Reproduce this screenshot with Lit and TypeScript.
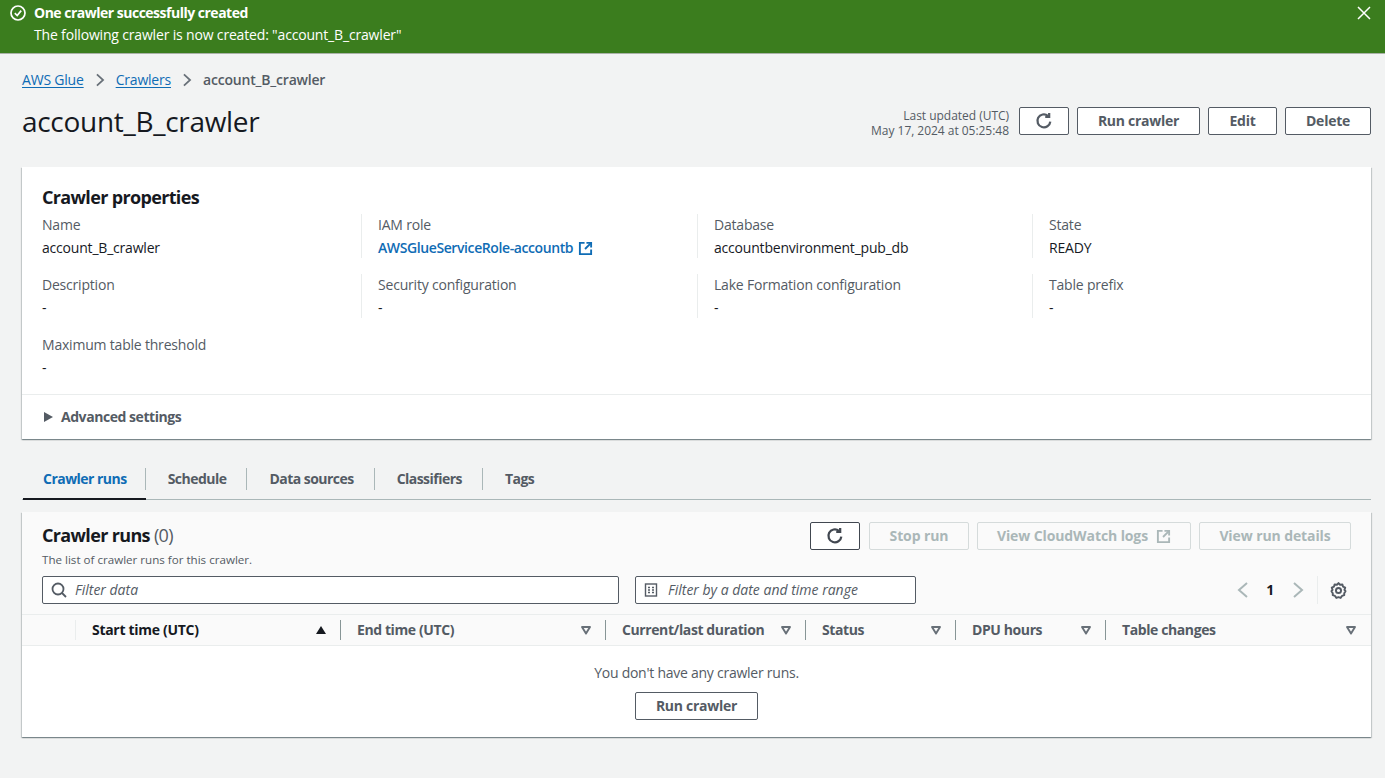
import { LitElement, html, css, svg } from "lit";
import { customElement } from "lit/decorators.js";

const refresh = (s = 18) => html`<svg class="ic" width=${s} height=${s} viewBox="0 0 16 16" fill="none" stroke="currentColor" stroke-width="2"><path d="M13.6 8.5A5.75 5.75 0 1 1 11.5 3.4"/><path d="M12.6 .8V4.3H9.1" stroke-linejoin="miter"/></svg>`;
const ext = (s = 16) => html`<svg class="ic" width=${s} height=${s} viewBox="0 0 16 16" fill="none" stroke="currentColor" stroke-width="2"><path d="M7 2H2V14H14V9"/><path d="M9 2H14V7"/><path d="M14 2L7.5 8.5"/></svg>`;
const caret = (active = false) => html`<svg class="sort" width="12" height="12" viewBox="0 0 12 12">${active
  ? svg`<path d="M1 10L6 2L11 10Z" fill="#16191f"/>`
  : svg`<path d="M2 3H10L6 9.6Z" fill="none" stroke="#687078" stroke-width="1.9" stroke-linejoin="round"/>`}</svg>`;

const props = [
  ["Name", "account_B_crawler"], ["IAM role", "AWSGlueServiceRole-accountb"], ["Database", "accountbenvironment_pub_db"], ["State", "READY"],
  ["Description", "-"], ["Security configuration", "-"], ["Lake Formation configuration", "-"], ["Table prefix", "-"],
  ["Maximum table threshold", "-"],
];
const tabs = ["Crawler runs", "Schedule", "Data sources", "Classifiers", "Tags"];
const cols = [["Start time (UTC)", 265], ["End time (UTC)", 265], ["Current/last duration", 200], ["Status", 150], ["DPU hours", 150], ["Table changes", 0]] as const;

@customElement("app-root")
export class AppRoot extends LitElement {
  static styles = css`
    :host { display: block; height: 778px; background: #f2f3f3; color: #16191f; font: 14px/20px "Open Sans", "Noto Sans", sans-serif; overflow: hidden; letter-spacing: -0.2px; }
    .ic { display: block; flex: none; }
    .banner { height: 54px; box-sizing: border-box; background: #3b7d1e; color: #fff; border-bottom: 1px solid #aab2a8; display: flex; padding: 2px 14px 0 10px; gap: 8px; }
    .banner b { font-weight: 700; display: block; letter-spacing: -0.5px; }
    .banner .msg { flex: 1; line-height: 22px; letter-spacing: -0.17px; }
    .main { padding: 15px 14px 0 22px; }
    .crumbs { display: flex; align-items: center; height: 22px; font-weight: 600; color: #545b64; }
    .crumbs a { color: #0f6cb5; text-decoration: underline; text-underline-offset: 2px; font-weight: 500; }
    .crumbs svg { margin: 0 9px; }
    .head { display: flex; align-items: flex-start; justify-content: space-between; margin-top: 5px; }
    h1 { margin: 0; font-size: 28px; line-height: 36px; font-weight: 400; letter-spacing: -0.3px; padding-top: 7px; }
    .actions { display: flex; align-items: flex-start; gap: 8px; padding-top: 11px; }
    .updated { font-size: 12px; line-height: 15px; margin-top: 1px; height: 28px; text-align: right; color: #545b64; margin-right: 2px; letter-spacing: -0.03px; }
    .btn { box-sizing: border-box; height: 28px; border: 1px solid #545b64; border-radius: 2px; background: #fff; color: #545b64; font-weight: 700; display: flex; align-items: center; justify-content: center; gap: 8px; white-space: nowrap; letter-spacing: -0.27px; }
    .btn.off { border-color: #d5dbdb; color: #aab7b8; background: #fafafa; letter-spacing: -0.1px; }
    .btn.dark { color: #414750; border-color: #414750; margin-right: 1px; }
    .card { background: #fff; box-shadow: 0 1px 1px 0 rgba(0,28,36,.3), 1px 1px 1px 0 rgba(0,28,36,.15), -1px 1px 1px 0 rgba(0,28,36,.15); }
    .props { margin-top: 28px; height: 272px; display: flex; flex-direction: column; }
    .props h2 { margin: 0; font-size: 18px; line-height: 24px; font-weight: 700; padding: 18px 20px 5px; letter-spacing: -0.65px; }
    .grid { display: grid; grid-template-columns: 319px 336px 335px 335px; padding-left: 20px; row-gap: 16px; flex: 1; align-content: start; }
    .cell { height: 44px; padding-left: 16px; border-left: 1px solid #eaeded; box-sizing: border-box; line-height: 22px; }
    .cell:nth-child(4n+1) { padding-left: 0; border-left: 0; }
    .cell:nth-child(9) { border-left: 0; }
    .cell .k { color: #545b64; }
    .cell .v { display: flex; align-items: center; gap: 5px; padding-top: 1px; }
    .cell a { color: #0f6cb5; font-weight: 600; letter-spacing: -0.4px; }
    .cell a + svg { color: #0f6cb5; }
    .adv { border-top: 1px solid #eaeded; height: 45px; flex: none; box-sizing: border-box; display: flex; align-items: center; padding-left: 22px; gap: 8px; font-weight: 700; color: #545b64; letter-spacing: -0.45px; }
    .tabs { display: flex; margin-top: 28px; border-bottom: 1px solid #aab7b8; height: 33px; box-sizing: border-box; padding-left: 1px; }
    .tab { display: flex; height: 33px; box-sizing: border-box; font-weight: 700; color: #545b64; align-items: flex-start; letter-spacing: -0.53px; }
    .tab span { border-right: 1px solid #aab7b8; height: 22px; padding: 0 20px 0 22px; line-height: 22px; margin-top: 1px; }
    .tab:first-child span { padding-left: 20px; padding-right: 18px; }
    .tab:last-child span { border-right: 0; }
    .tab.on { color: #0f6cb5; border-bottom: 2px solid #16191f; }
    .runs { margin-top: 12px; height: 225px; display: flex; flex-direction: column; }
    .runs-top { background: #fafafa; height: 103px; box-sizing: border-box; padding: 10px 20px 0; border-bottom: 1px solid #eaeded; flex: none; }
    .r1 { display: flex; justify-content: space-between; align-items: flex-start; height: 38px; }
    .r1 h2 { margin: -1px 0 3px; font-size: 18px; line-height: 28px; font-weight: 700; letter-spacing: -0.65px; }
    .r1 h2 span { font-weight: 400; color: #545b64; }
    .r1 .desc { font-size: 11.6px; line-height: 16px; color: #545b64; letter-spacing: 0; }
    .r1 .acts { display: flex; gap: 8px; }
    .r2 { display: flex; align-items: center; margin-top: 16px; }
    .input { box-sizing: border-box; height: 28px; border: 1px solid #545b64; border-radius: 2px; background: #fff; display: flex; align-items: center; gap: 8px; padding-left: 8px; font-style: italic; color: #545b64; letter-spacing: 0; }
    .input.date { gap: 10px; margin-left: 16px; }
    .pager { margin-left: auto; margin-right: 4px; display: flex; align-items: center; color: #16191f; font-weight: 700; }
    .pager span { margin: 0 16px 0 15px; }
    .pager .sep { width: 1px; height: 28px; background: #eaeded; margin: 0 12px 0 11px; }
    .thead { display: flex; height: 31px; box-sizing: border-box; background: #fafafa; border-bottom: 1px solid #eaeded; align-items: center; flex: none; font-weight: 700; color: #545b64; letter-spacing: -0.4px; }
    .lead { width: 54px; height: 20px; border-right: 1px solid #eaeded; flex: none; box-sizing: border-box; }
    .th { display: flex; align-items: center; justify-content: space-between; height: 20px; box-sizing: border-box; padding: 0 13px 0 16px; border-right: 1px solid #879596; flex: none; }
    .th.first { color: #16191f; letter-spacing: -0.3px; }
    .th:last-child { border-right: 0; flex: 1; padding-right: 14px; }
    .sort { display: block; flex: none; }
    .empty { flex: 1; display: flex; flex-direction: column; align-items: center; padding-top: 17px; color: #545b64; letter-spacing: -0.25px; }
    .empty .btn { margin-top: 9px; width: 123px; }
  `;
  render() {
    const sep = html`<svg width="14" height="14" viewBox="0 0 16 16" fill="none" stroke="#687078" stroke-width="2"><path d="M4.5 1.5L11.5 8L4.5 14.5"/></svg>`;
    return html`
      <div class="banner">
        <svg class="ic" style="margin-top:3px" width="16" height="16" viewBox="0 0 16 16" fill="none" stroke="#fff" stroke-width="1.7"><circle cx="8" cy="8" r="7"/><path d="M4.8 8.2L7.2 10.5L11.2 5.6"/></svg>
        <div class="msg"><b>One crawler successfully created</b>The following crawler is now created: "account_B_crawler"</div>
        <svg class="ic" style="margin-top:4px" width="14" height="14" viewBox="0 0 14 14" stroke="#fff" stroke-width="1.5"><path d="M1 1L13 13M13 1L1 13"/></svg>
      </div>
      <div class="main">
        <div class="crumbs"><a>AWS Glue</a>${sep}<a>Crawlers</a>${sep}<span>account_B_crawler</span></div>
        <div class="head">
          <h1>account_B_crawler</h1>
          <div class="actions">
            <div class="updated">Last updated (UTC)<br/>May 17, 2024 at 05:25:48</div>
            <div class="btn" style="width:50px">${refresh()}</div>
            <div class="btn" style="width:123px">Run crawler</div>
            <div class="btn" style="width:69px">Edit</div>
            <div class="btn" style="width:86px">Delete</div>
          </div>
        </div>
        <section class="card props">
          <h2>Crawler properties</h2>
          <div class="grid">
            ${props.map(([k, v]) => html`<div class="cell"><div class="k">${k}</div><div class="v">${k === "IAM role" ? html`<a>${v}</a>${ext(15)}` : v}</div></div>`)}
          </div>
          <div class="adv"><svg width="9" height="10" viewBox="0 0 9 10"><path d="M0 0L9 5L0 10Z" fill="#545b64"/></svg>Advanced settings</div>
        </section>
        <div class="tabs">${tabs.map((t, i) => html`<div class="tab ${i === 0 ? "on" : ""}"><span>${t}</span></div>`)}</div>
        <section class="card runs">
          <div class="runs-top">
            <div class="r1">
              <div><h2>Crawler runs <span>(0)</span></h2><div class="desc">The list of crawler runs for this crawler.</div></div>
              <div class="acts">
                <div class="btn dark" style="width:50px">${refresh()}</div>
                <div class="btn off" style="width:100px">Stop run</div>
                <div class="btn off" style="width:214px">View CloudWatch logs ${ext(15)}</div>
                <div class="btn off" style="width:152px">View run details</div>
              </div>
            </div>
            <div class="r2">
              <div class="input" style="width:577px"><svg class="ic" width="16" height="16" viewBox="0 0 16 16" fill="none" stroke="#545b64" stroke-width="1.8"><circle cx="7" cy="7" r="5.5"/><path d="M11 11L15 15"/></svg>Filter data</div>
              <div class="input date" style="width:281px"><svg class="ic" width="14" height="14" viewBox="0 0 14 14" fill="none" stroke="#545b64" stroke-width="1.4"><rect x="1.5" y="1" width="11" height="12"/><path d="M4 4.5H6M8 4.5H10M4 7H6M8 7H10M4 9.5H6M8 9.5H10"/></svg>Filter by a date and time range</div>
              <div class="pager">
                <svg width="16" height="18" viewBox="0 0 16 18" fill="none" stroke="#aab7b8" stroke-width="2"><path d="M12 2L4 9L12 16"/></svg>
                <span>1</span>
                <svg width="16" height="18" viewBox="0 0 16 18" fill="none" stroke="#aab7b8" stroke-width="2"><path d="M4 2L12 9L4 16"/></svg>
                <div class="sep"></div>
                <svg width="17" height="17" viewBox="0 0 16 16" fill="none" stroke="#545b64" stroke-width="1.8"><path d="M8 1L9.5 2.6L11.7 2.3L12.3 4.4L14.3 5.3L13.6 7.4L14.6 8.6L13.4 10.5L13.4 12.4L11.4 13L10 15L8 14.3L6 15L4.6 13L2.6 12.4L2.6 10.5L1.4 8.6L2.4 7.4L1.7 5.3L3.7 4.4L4.3 2.3L6.5 2.6Z" stroke-linejoin="round"/><circle cx="8" cy="8" r="2.4"/></svg>
              </div>
            </div>
          </div>
          <div class="thead">
            <div class="lead"></div>
            ${cols.map(([c, w], i) => html`<div class="th ${i === 0 ? "first" : ""}" style=${w ? `width:${w}px` : ""}>${c}${caret(i === 0)}</div>`)}
          </div>
          <div class="empty">You don't have any crawler runs.<div class="btn">Run crawler</div></div>
        </section>
      </div>
    `;
  }
}
